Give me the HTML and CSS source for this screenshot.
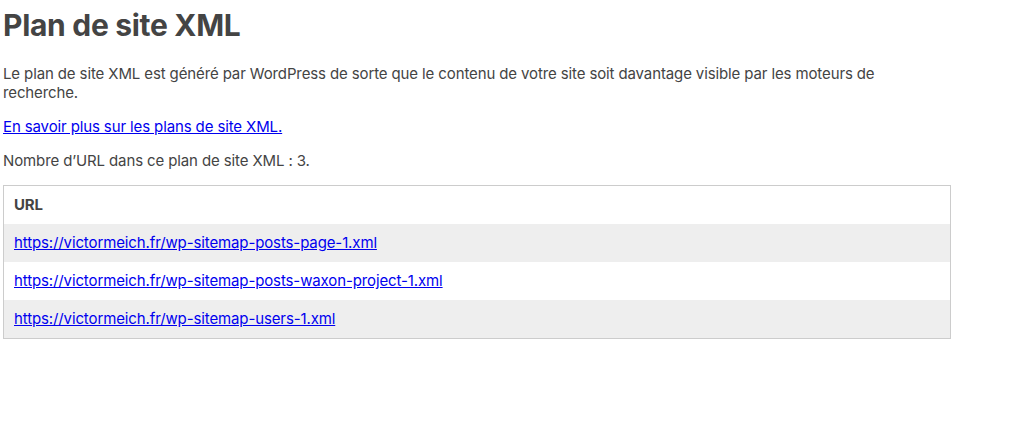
FILE: index.html
```html
<!DOCTYPE html>
<html lang="fr">
<head>
<meta charset="utf-8">
<title>Plan de site XML</title>
<link rel="stylesheet" href="styles.css">
</head>
<body>
<div class="sitemap">
  <div class="sitemap-header">
    <h1 class="title">Plan de site XML</h1>
    <p class="text">Le plan de site XML est généré par WordPress de sorte que le contenu de votre site soit davantage visible par les moteurs de recherche.</p>
    <p class="text"><a class="link" href="#">En savoir plus sur les plans de site XML.</a></p>
  </div>
  <div class="sitemap-content">
    <p class="text">Nombre d’URL dans ce plan de site XML : 3.</p>
    <table class="sitemap-table">
      <thead>
        <tr><th class="cell head">URL</th></tr>
      </thead>
      <tbody>
        <tr class="row odd"><td class="cell"><a class="link" href="#">https://victormeich.fr/wp-sitemap-posts-page-1.xml</a></td></tr>
        <tr class="row"><td class="cell"><a class="link" href="#">https://victormeich.fr/wp-sitemap-posts-waxon-project-1.xml</a></td></tr>
        <tr class="row odd"><td class="cell"><a class="link" href="#">https://victormeich.fr/wp-sitemap-users-1.xml</a></td></tr>
      </tbody>
    </table>
  </div>
</div>
</body>
</html>
```

FILE: styles.css
```css
html, body {
  margin: 0;
  padding: 0;
  background: #fff;
}
body {
  font-family: Inter, "Liberation Sans", sans-serif;
  font-size: 15px;
  line-height: 19px;
  letter-spacing: -0.12px;
  color: #444;
}
.sitemap {
  width: 948px;
  padding: 7px 0 0 3px;
}
.title {
  font-size: 30px;
  line-height: 36px;
  font-weight: 700;
  letter-spacing: -0.3px;
  margin: 0 0 21px;
}
.text {
  margin: 0 0 15px;
}
.link {
  color: #0000ee;
  text-decoration: underline;
}
.sitemap-table {
  width: 100%;
  border: 1px solid #ccc;
  border-collapse: collapse;
}
.cell {
  padding: 10px;
  line-height: 18px;
  text-align: left;
}
.head {
  font-weight: 700;
}
.row.odd .cell {
  background-color: #eee;
}
```
